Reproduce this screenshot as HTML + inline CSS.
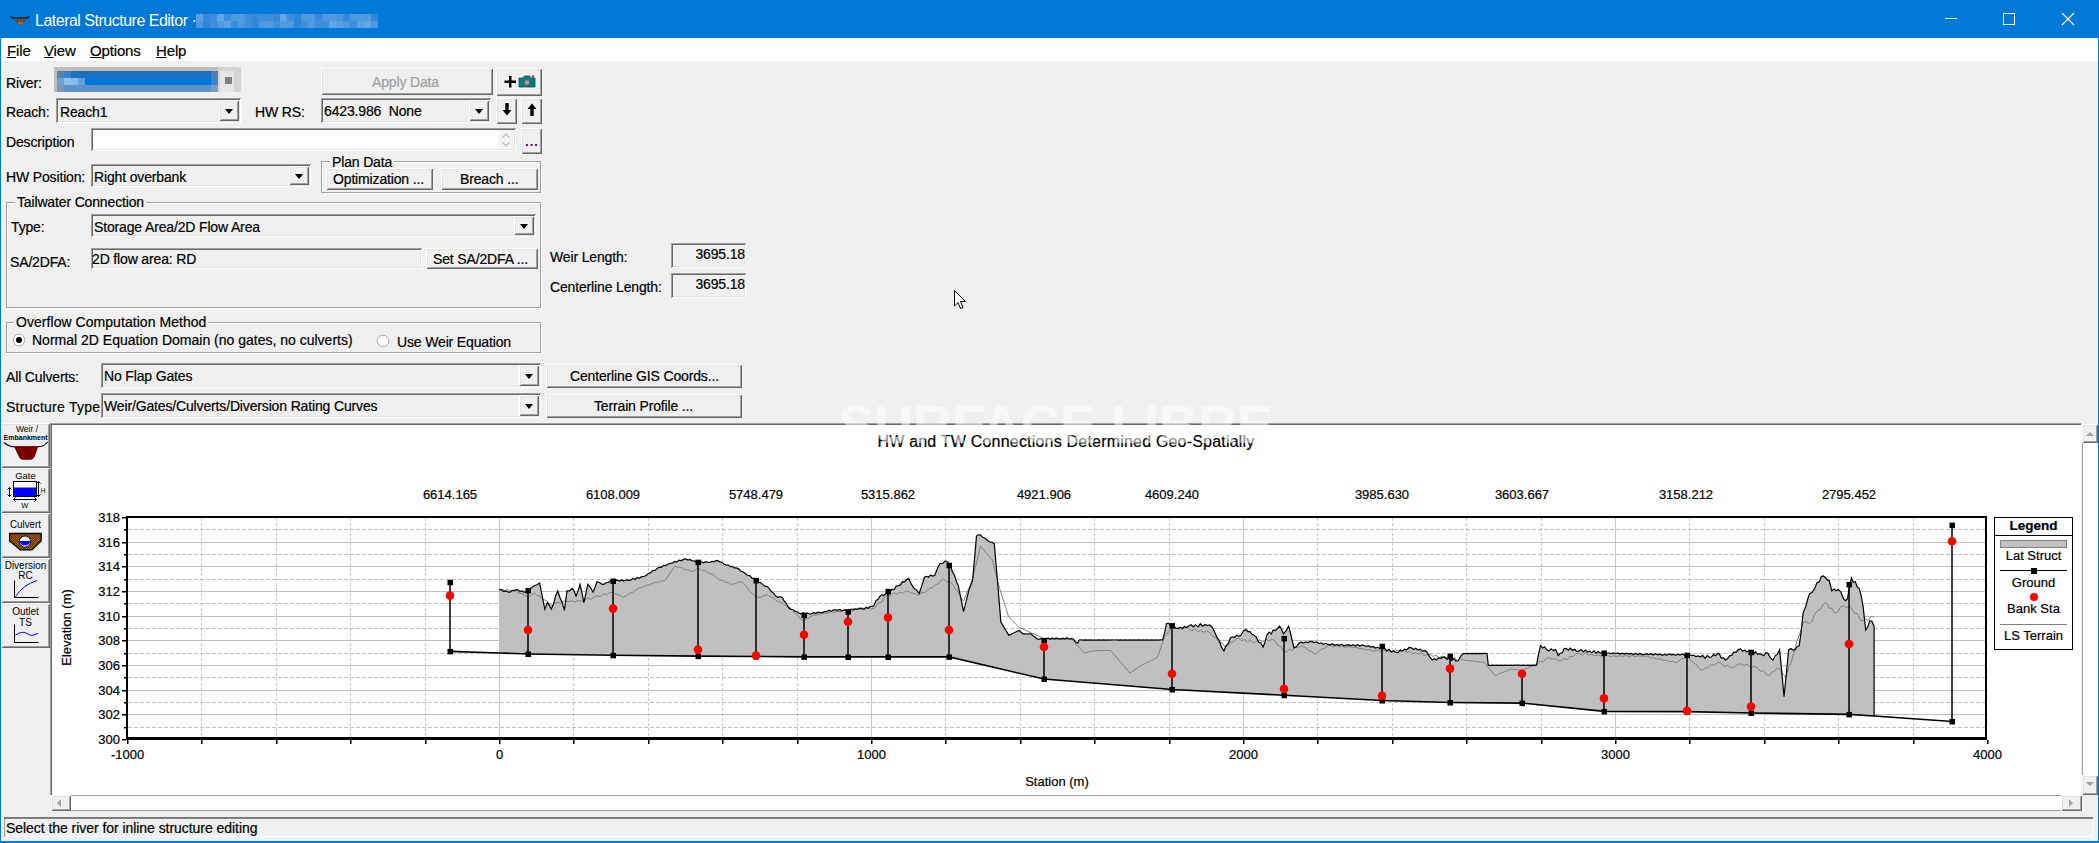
<!DOCTYPE html><html><head><meta charset="utf-8"><style>
html,body{margin:0;padding:0;}
body{width:2099px;height:843px;position:relative;overflow:hidden;background:#f0f0f0;font-family:"Liberation Sans", sans-serif;}
div{position:absolute;box-sizing:border-box;}
.t{white-space:nowrap;color:#000;line-height:1.15;letter-spacing:-0.15px;-webkit-text-stroke:0.2px currentColor;}
.rs{background:#f0f0f0;box-shadow:inset 1px 1px #fff,inset -1px -1px #696969,inset 2px 2px #e3e3e3,inset -2px -2px #a0a0a0;}
.sk{box-shadow:inset 1px 1px #a0a0a0,inset -1px -1px #fff,inset 2px 2px #696969,inset -2px -2px #e3e3e3;}
.grp{border:1px solid #a0a0a0;box-shadow:1px 1px #fff, inset 1px 1px #fff;}
.arr{width:0;height:0;border-left:4.5px solid transparent;border-right:4.5px solid transparent;border-top:5px solid #000;}
svg{position:absolute;left:0;top:0;}
</style></head><body>

<div style="left:0px;top:0px;width:2099px;height:38px;background:#0078d7;"></div>
<svg width="40" height="37" style="left:0;top:0" viewBox="0 0 40 37"><path d="M10.5 16.5 L13 18 L27 18 L29.5 16.5" stroke="#0a2030" stroke-width="1.6" fill="none"/><path d="M15 18.5 L26 18.5 L23.5 24 L17.5 24 Z" fill="#7a3a08"/><path d="M17.5 22 L23.5 22 L23 24 L18 24 Z" fill="#c06010"/><circle cx="18.8" cy="20.3" r="1.1" fill="#0078d7"/><circle cx="21.9" cy="20.3" r="1.1" fill="#0078d7"/></svg>
<div class="t" style="left:35px;top:12px;font-size:16px;letter-spacing:-0.5px;color:#fff;-webkit-text-stroke:0">Lateral Structure Editor ·</div>
<div style="left:196px;top:14px;width:7px;height:7px;background:#5aa0e4"></div><div style="left:196px;top:21px;width:7px;height:7px;background:#4b97e0"></div><div style="left:203px;top:14px;width:7px;height:7px;background:#3489db"></div><div style="left:203px;top:21px;width:7px;height:7px;background:#2f86d9"></div><div style="left:210px;top:14px;width:7px;height:7px;background:#3d8fdd"></div><div style="left:210px;top:21px;width:7px;height:7px;background:#3d8fdd"></div><div style="left:217px;top:14px;width:7px;height:7px;background:#62a5e6"></div><div style="left:217px;top:21px;width:7px;height:7px;background:#4f9ae1"></div><div style="left:224px;top:14px;width:7px;height:7px;background:#3d8fdd"></div><div style="left:224px;top:21px;width:7px;height:7px;background:#5aa0e4"></div><div style="left:231px;top:14px;width:7px;height:7px;background:#4f9ae1"></div><div style="left:231px;top:21px;width:7px;height:7px;background:#3d8fdd"></div><div style="left:238px;top:14px;width:7px;height:7px;background:#4f9ae1"></div><div style="left:238px;top:21px;width:7px;height:7px;background:#4b97e0"></div><div style="left:245px;top:14px;width:7px;height:7px;background:#3d8fdd"></div><div style="left:245px;top:21px;width:7px;height:7px;background:#3d8fdd"></div><div style="left:252px;top:14px;width:7px;height:7px;background:#3489db"></div><div style="left:252px;top:21px;width:7px;height:7px;background:#3489db"></div><div style="left:259px;top:14px;width:7px;height:7px;background:#3d8fdd"></div><div style="left:259px;top:21px;width:7px;height:7px;background:#4b97e0"></div><div style="left:266px;top:14px;width:7px;height:7px;background:#3d8fdd"></div><div style="left:266px;top:21px;width:7px;height:7px;background:#4f9ae1"></div><div style="left:273px;top:14px;width:7px;height:7px;background:#3489db"></div><div style="left:273px;top:21px;width:7px;height:7px;background:#3d8fdd"></div><div style="left:280px;top:14px;width:7px;height:7px;background:#62a5e6"></div><div style="left:280px;top:21px;width:7px;height:7px;background:#4f9ae1"></div><div style="left:287px;top:14px;width:7px;height:7px;background:#3d8fdd"></div><div style="left:287px;top:21px;width:7px;height:7px;background:#4b97e0"></div><div style="left:294px;top:14px;width:7px;height:7px;background:#2f86d9"></div><div style="left:294px;top:21px;width:7px;height:7px;background:#2f86d9"></div><div style="left:301px;top:14px;width:7px;height:7px;background:#4f9ae1"></div><div style="left:301px;top:21px;width:7px;height:7px;background:#3d8fdd"></div><div style="left:308px;top:14px;width:7px;height:7px;background:#4f9ae1"></div><div style="left:308px;top:21px;width:7px;height:7px;background:#4f9ae1"></div><div style="left:315px;top:14px;width:7px;height:7px;background:#3489db"></div><div style="left:315px;top:21px;width:7px;height:7px;background:#3d8fdd"></div><div style="left:322px;top:14px;width:7px;height:7px;background:#4b97e0"></div><div style="left:322px;top:21px;width:7px;height:7px;background:#3d8fdd"></div><div style="left:329px;top:14px;width:7px;height:7px;background:#4f9ae1"></div><div style="left:329px;top:21px;width:7px;height:7px;background:#62a5e6"></div><div style="left:336px;top:14px;width:7px;height:7px;background:#4b97e0"></div><div style="left:336px;top:21px;width:7px;height:7px;background:#5aa0e4"></div><div style="left:343px;top:14px;width:7px;height:7px;background:#3489db"></div><div style="left:343px;top:21px;width:7px;height:7px;background:#4b97e0"></div><div style="left:350px;top:14px;width:7px;height:7px;background:#4f9ae1"></div><div style="left:350px;top:21px;width:7px;height:7px;background:#3d8fdd"></div><div style="left:357px;top:14px;width:7px;height:7px;background:#4f9ae1"></div><div style="left:357px;top:21px;width:7px;height:7px;background:#5aa0e4"></div><div style="left:364px;top:14px;width:7px;height:7px;background:#4f9ae1"></div><div style="left:364px;top:21px;width:7px;height:7px;background:#62a5e6"></div><div style="left:371px;top:14px;width:7px;height:7px;background:#2f86d9"></div><div style="left:371px;top:21px;width:7px;height:7px;background:#4b97e0"></div>
<div style="left:1945px;top:18px;width:12px;height:1px;background:#fff;"></div>
<div style="left:2003px;top:13px;width:12px;height:12px;border:1px solid #fff;"></div>
<svg width="14" height="14" style="left:2061px;top:12px" viewBox="0 0 14 14"><path d="M1 1 L13 13 M13 1 L1 13" stroke="#fff" stroke-width="1.1"/></svg>
<div style="left:0px;top:37px;width:1px;height:806px;background:#0078d7;"></div>
<div style="left:2098px;top:37px;width:1px;height:806px;background:#0078d7;"></div>
<div style="left:0px;top:841px;width:2099px;height:2px;background:#0078d7;"></div>
<div style="left:1px;top:38px;width:2097px;height:23px;background:#fff;"></div>
<div class="t" style="left:7px;top:42px;font-size:15px"><u>F</u>ile</div>
<div class="t" style="left:44px;top:42px;font-size:15px"><u>V</u>iew</div>
<div class="t" style="left:90px;top:42px;font-size:15px"><u>O</u>ptions</div>
<div class="t" style="left:156px;top:42px;font-size:15px"><u>H</u>elp</div>
<div class="t" style="left:6px;top:75px;font-size:14px;">River:</div>
<div style="left:54px;top:67px;width:187px;height:25px;background:#bdbdbd;"></div>
<div style="left:57px;top:71px;width:7px;height:7px;background:#5584b0"></div>
<div style="left:57px;top:78px;width:7px;height:7px;background:#6fa3d0"></div>
<div style="left:57px;top:85px;width:7px;height:7px;background:#7898b8"></div>
<div style="left:64px;top:71px;width:7px;height:7px;background:#3a80c8"></div>
<div style="left:64px;top:78px;width:7px;height:7px;background:#8cc0ea"></div>
<div style="left:64px;top:85px;width:7px;height:7px;background:#5b92c8"></div>
<div style="left:71px;top:71px;width:7px;height:7px;background:#1c70bd"></div>
<div style="left:71px;top:78px;width:7px;height:7px;background:#86bbe8"></div>
<div style="left:71px;top:85px;width:7px;height:7px;background:#5b92c8"></div>
<div style="left:78px;top:71px;width:7px;height:7px;background:#1c70bd"></div>
<div style="left:78px;top:78px;width:7px;height:7px;background:#5fa2e2"></div>
<div style="left:78px;top:85px;width:7px;height:7px;background:#5b92c8"></div>
<div style="left:85px;top:71px;width:7px;height:7px;background:#1c70bd"></div>
<div style="left:85px;top:78px;width:7px;height:7px;background:#0078d7"></div>
<div style="left:85px;top:85px;width:7px;height:7px;background:#5b92c8"></div>
<div style="left:92px;top:71px;width:7px;height:7px;background:#1c70bd"></div>
<div style="left:92px;top:78px;width:7px;height:7px;background:#0078d7"></div>
<div style="left:92px;top:85px;width:7px;height:7px;background:#5b92c8"></div>
<div style="left:99px;top:71px;width:7px;height:7px;background:#1c70bd"></div>
<div style="left:99px;top:78px;width:7px;height:7px;background:#0078d7"></div>
<div style="left:99px;top:85px;width:7px;height:7px;background:#5b92c8"></div>
<div style="left:106px;top:71px;width:7px;height:7px;background:#1c70bd"></div>
<div style="left:106px;top:78px;width:7px;height:7px;background:#0078d7"></div>
<div style="left:106px;top:85px;width:7px;height:7px;background:#5b92c8"></div>
<div style="left:113px;top:71px;width:7px;height:7px;background:#1c70bd"></div>
<div style="left:113px;top:78px;width:7px;height:7px;background:#0078d7"></div>
<div style="left:113px;top:85px;width:7px;height:7px;background:#5b92c8"></div>
<div style="left:120px;top:71px;width:7px;height:7px;background:#1c70bd"></div>
<div style="left:120px;top:78px;width:7px;height:7px;background:#0078d7"></div>
<div style="left:120px;top:85px;width:7px;height:7px;background:#5b92c8"></div>
<div style="left:127px;top:71px;width:7px;height:7px;background:#1c70bd"></div>
<div style="left:127px;top:78px;width:7px;height:7px;background:#0078d7"></div>
<div style="left:127px;top:85px;width:7px;height:7px;background:#5b92c8"></div>
<div style="left:134px;top:71px;width:7px;height:7px;background:#1c70bd"></div>
<div style="left:134px;top:78px;width:7px;height:7px;background:#0078d7"></div>
<div style="left:134px;top:85px;width:7px;height:7px;background:#5b92c8"></div>
<div style="left:141px;top:71px;width:7px;height:7px;background:#1c70bd"></div>
<div style="left:141px;top:78px;width:7px;height:7px;background:#0078d7"></div>
<div style="left:141px;top:85px;width:7px;height:7px;background:#5b92c8"></div>
<div style="left:148px;top:71px;width:7px;height:7px;background:#1c70bd"></div>
<div style="left:148px;top:78px;width:7px;height:7px;background:#0078d7"></div>
<div style="left:148px;top:85px;width:7px;height:7px;background:#5b92c8"></div>
<div style="left:155px;top:71px;width:7px;height:7px;background:#1c70bd"></div>
<div style="left:155px;top:78px;width:7px;height:7px;background:#0078d7"></div>
<div style="left:155px;top:85px;width:7px;height:7px;background:#5b92c8"></div>
<div style="left:162px;top:71px;width:7px;height:7px;background:#1c70bd"></div>
<div style="left:162px;top:78px;width:7px;height:7px;background:#0078d7"></div>
<div style="left:162px;top:85px;width:7px;height:7px;background:#5b92c8"></div>
<div style="left:169px;top:71px;width:7px;height:7px;background:#1c70bd"></div>
<div style="left:169px;top:78px;width:7px;height:7px;background:#0078d7"></div>
<div style="left:169px;top:85px;width:7px;height:7px;background:#5b92c8"></div>
<div style="left:176px;top:71px;width:7px;height:7px;background:#1c70bd"></div>
<div style="left:176px;top:78px;width:7px;height:7px;background:#0078d7"></div>
<div style="left:176px;top:85px;width:7px;height:7px;background:#5b92c8"></div>
<div style="left:183px;top:71px;width:7px;height:7px;background:#1c70bd"></div>
<div style="left:183px;top:78px;width:7px;height:7px;background:#0078d7"></div>
<div style="left:183px;top:85px;width:7px;height:7px;background:#5b92c8"></div>
<div style="left:190px;top:71px;width:7px;height:7px;background:#1c70bd"></div>
<div style="left:190px;top:78px;width:7px;height:7px;background:#0078d7"></div>
<div style="left:190px;top:85px;width:7px;height:7px;background:#5b92c8"></div>
<div style="left:197px;top:71px;width:7px;height:7px;background:#1c70bd"></div>
<div style="left:197px;top:78px;width:7px;height:7px;background:#0078d7"></div>
<div style="left:197px;top:85px;width:7px;height:7px;background:#5b92c8"></div>
<div style="left:204px;top:71px;width:7px;height:7px;background:#1c70bd"></div>
<div style="left:204px;top:78px;width:7px;height:7px;background:#0078d7"></div>
<div style="left:204px;top:85px;width:7px;height:7px;background:#5b92c8"></div>
<div style="left:211px;top:71px;width:7px;height:7px;background:#4a7fb0"></div>
<div style="left:211px;top:78px;width:7px;height:7px;background:#3d86c8"></div>
<div style="left:211px;top:85px;width:7px;height:7px;background:#7a9cc0"></div>
<div style="left:218px;top:67px;width:23px;height:25px;background:#d4d4d4;"></div>
<div style="left:220px;top:71px;width:14px;height:21px;background:#e6e6e6;"></div>
<div style="left:225px;top:77px;width:7px;height:7px;background:#808080;"></div>
<div class="rs" style="left:321px;top:68px;width:172px;height:27px;"></div>
<div class="t" style="left:372px;top:74px;font-size:14px;color:#a0a0a0;">Apply Data</div>
<div class="rs" style="left:496px;top:68px;width:46px;height:28px;"></div>
<svg width="14" height="14" style="left:503px;top:75px" viewBox="0 0 14 14"><path d="M6 1 H8.5 V5.5 H13 V8 H8.5 V12.5 H6 V8 H1.5 V5.5 H6 Z" fill="#000"/></svg>
<svg width="18" height="13" style="left:518px;top:75px" viewBox="0 0 18 13"><path d="M1 3 H5 L6.5 1 H11.5 L13 3 H17 V12 H1 Z" fill="#008080" stroke="#004040" stroke-width="0.7"/><circle cx="9" cy="7.5" r="3.6" fill="#606060"/><circle cx="9" cy="7.5" r="2.2" fill="#a0a0a0"/><rect x="14" y="0.5" width="2" height="2" fill="#f00"/></svg>
<div class="t" style="left:6px;top:104px;font-size:14px;">Reach:</div>
<div class="sk" style="left:56px;top:98px;width:185px;height:25px;background:#f0f0f0;"></div>
<div class="rs" style="left:219px;top:100px;width:20px;height:21px;"></div>
<div class="arr" style="left:225px;top:109px"></div>
<div class="t" style="left:60px;top:104px;font-size:14px;">Reach1</div>
<div class="t" style="left:255px;top:104px;font-size:14px;">HW RS:</div>
<div class="sk" style="left:321px;top:98px;width:170px;height:25px;background:#f0f0f0;"></div>
<div class="rs" style="left:469px;top:100px;width:20px;height:21px;"></div>
<div class="arr" style="left:475px;top:109px"></div>
<div class="t" style="left:324px;top:103px;font-size:14px;">6423.986&nbsp; None</div>
<div class="rs" style="left:496px;top:98px;width:21px;height:26px;"></div>
<div class="rs" style="left:521px;top:98px;width:21px;height:26px;"></div>
<svg width="12" height="16" style="left:501px;top:102px" viewBox="0 0 12 16"><path d="M4.3 1 H7.7 V8 H10.5 L6 13.5 L1.5 8 H4.3 Z" fill="#000"/></svg>
<svg width="12" height="16" style="left:526px;top:102px" viewBox="0 0 12 16"><path d="M4.3 14 H7.7 V7 H10.5 L6 1.5 L1.5 7 H4.3 Z" fill="#000"/></svg>
<div class="t" style="left:6px;top:134px;font-size:14px;">Description</div>
<div class="sk" style="left:91px;top:128px;width:425px;height:23px;background:#fff;"></div>
<div style="left:499px;top:130px;width:15px;height:19px;background:#f4f4f4;"></div>
<svg width="14" height="20" style="left:499px;top:130px" viewBox="0 0 14 20"><path d="M3.5 7.5 L7 4 L10.5 7.5 M3.5 12.5 L7 16 L10.5 12.5" stroke="#c0c0c0" stroke-width="1.4" fill="none"/></svg>
<div class="rs" style="left:521px;top:128px;width:21px;height:26px;"></div>
<svg width="14" height="4" style="left:525px;top:143px" viewBox="0 0 14 4"><rect x="1" y="1" width="2" height="2" fill="#800080"/><rect x="5.5" y="1" width="2" height="2" fill="#800080"/><rect x="10" y="1" width="2" height="2" fill="#800080"/></svg>
<div class="t" style="left:6px;top:169px;font-size:14px;">HW Position:</div>
<div class="sk" style="left:91px;top:164px;width:220px;height:23px;background:#f0f0f0;"></div>
<div class="rs" style="left:289px;top:166px;width:20px;height:19px;"></div>
<div class="arr" style="left:295px;top:174px"></div>
<div class="t" style="left:94px;top:169px;font-size:14px;">Right overbank</div>
<div class="grp" style="left:321px;top:161px;width:220px;height:32px"></div>
<div class="t" style="left:-2px;top:152px;padding:0 2px;background:#f0f0f0;font-size:13.7px"></div>
<div class="t" style="left:332px;top:154px;font-size:14px;background:#f0f0f0;padding:0 2px;margin-left:-2px;">Plan Data</div>
<div class="rs" style="left:326px;top:168px;width:107px;height:22px;"></div>
<div class="t" style="left:333px;top:171px;font-size:14px;">Optimization ...</div>
<div class="rs" style="left:441px;top:168px;width:97px;height:22px;"></div>
<div class="t" style="left:460px;top:171px;font-size:14px;">Breach ...</div>
<div class="grp" style="left:6px;top:202px;width:535px;height:106px"></div>
<div class="t" style="left:-2px;top:193px;padding:0 2px;background:#f0f0f0;font-size:13.7px"></div>
<div class="t" style="left:17px;top:194px;font-size:14px;background:#f0f0f0;padding:0 2px;margin-left:-2px;">Tailwater Connection</div>
<div class="t" style="left:11px;top:219px;font-size:14px;">Type:</div>
<div class="sk" style="left:91px;top:214px;width:445px;height:23px;background:#f0f0f0;"></div>
<div class="rs" style="left:514px;top:216px;width:20px;height:19px;"></div>
<div class="arr" style="left:520px;top:224px"></div>
<div class="t" style="left:94px;top:219px;font-size:14px;">Storage Area/2D Flow Area</div>
<div class="t" style="left:10px;top:254px;font-size:14px;">SA/2DFA:</div>
<div class="sk" style="left:91px;top:248px;width:331px;height:21px;background:#f0f0f0;"></div>
<div class="t" style="left:92px;top:251px;font-size:14px;">2D flow area: RD</div>
<div class="rs" style="left:426px;top:248px;width:112px;height:21px;"></div>
<div class="t" style="left:433px;top:251px;font-size:14px;">Set SA/2DFA ...</div>
<div class="t" style="left:550px;top:249px;font-size:14px;">Weir Length:</div>
<div class="sk" style="left:671px;top:243px;width:75px;height:25px;background:#f0f0f0;"></div>
<div class="t" style="left:545px;top:246px;width:200px;text-align:right;font-size:14px;">3695.18</div>
<div class="t" style="left:550px;top:279px;font-size:14px;">Centerline Length:</div>
<div class="sk" style="left:671px;top:273px;width:75px;height:25px;background:#f0f0f0;"></div>
<div class="t" style="left:545px;top:276px;width:200px;text-align:right;font-size:14px;">3695.18</div>
<div class="grp" style="left:6px;top:322px;width:535px;height:31px"></div>
<div class="t" style="left:-2px;top:313px;padding:0 2px;background:#f0f0f0;font-size:13.7px"></div>
<div class="t" style="left:16px;top:314px;font-size:14px;background:#f0f0f0;padding:0 2px;margin-left:-2px;letter-spacing:0.05px;">Overflow Computation Method</div>
<svg width="14" height="14" style="left:12px;top:333px" viewBox="0 0 14 14"><circle cx="7" cy="7" r="5.8" fill="#fff" stroke="#b0b0b0" stroke-width="1"/><circle cx="7" cy="7" r="3" fill="#000"/></svg>
<div class="t" style="left:32px;top:332px;font-size:14px;letter-spacing:0;">Normal 2D Equation Domain (no gates, no culverts)</div>
<svg width="14" height="14" style="left:376px;top:334px" viewBox="0 0 14 14"><circle cx="7" cy="7" r="5.8" fill="#fff" stroke="#b0b0b0" stroke-width="1"/></svg>
<div class="t" style="left:397px;top:334px;font-size:14px;">Use Weir Equation</div>
<div class="t" style="left:6px;top:369px;font-size:14px;">All Culverts:</div>
<div class="sk" style="left:101px;top:363px;width:440px;height:25px;background:#f0f0f0;"></div>
<div class="rs" style="left:519px;top:365px;width:20px;height:21px;"></div>
<div class="arr" style="left:525px;top:374px"></div>
<div class="t" style="left:104px;top:368px;font-size:14px;">No Flap Gates</div>
<div class="rs" style="left:546px;top:364px;width:196px;height:24px;"></div>
<div class="t" style="left:570px;top:368px;font-size:14px;">Centerline GIS Coords...</div>
<div class="t" style="left:6px;top:399px;font-size:14px;letter-spacing:0.25px;width:98px;overflow:hidden;">Structure Type:</div>
<div class="sk" style="left:101px;top:393px;width:440px;height:25px;background:#f0f0f0;"></div>
<div class="rs" style="left:519px;top:395px;width:20px;height:21px;"></div>
<div class="arr" style="left:525px;top:404px"></div>
<div class="t" style="left:104px;top:398px;font-size:14px;">Weir/Gates/Culverts/Diversion Rating Curves</div>
<div class="rs" style="left:546px;top:394px;width:196px;height:24px;"></div>
<div class="t" style="left:594px;top:398px;font-size:14px;">Terrain Profile ...</div>
<div class="rs" style="left:1px;top:423px;width:49px;height:45px;"></div>
<div class="rs" style="left:1px;top:468px;width:49px;height:45px;"></div>
<div class="rs" style="left:1px;top:513px;width:49px;height:45px;"></div>
<div class="rs" style="left:1px;top:558px;width:49px;height:45px;"></div>
<div class="rs" style="left:1px;top:603px;width:49px;height:45px;"></div>
<svg width="50" height="230" style="left:1px;top:423px" viewBox="0 0 50 230">
<defs><pattern id="chk" width="2" height="2" patternUnits="userSpaceOnUse"><rect width="2" height="2" fill="#8b1a00"/><rect width="1" height="1" fill="#7a7a00"/><rect x="1" y="1" width="1" height="1" fill="#7a7a00"/></pattern></defs>
<text x="26" y="9" font-size="8.5" text-anchor="middle" font-family="Liberation Sans">Weir /</text>
<text x="24.6" y="16.8" font-size="7.6" text-anchor="middle" font-family="Liberation Sans" font-weight="bold" textLength="44" lengthAdjust="spacingAndGlyphs">Embankment</text>
<path d="M3 19.5 Q8 23.8 13.5 23.8 L37 23.8 Q43 23.8 46.5 19" stroke="#000" fill="none" stroke-width="1.1"/>
<path d="M13 23.6 L37 23.6 Q35.5 29 34 33 Q32 36.8 29.5 36.8 L22 36.8 Q19 36.8 17.5 33 Q15.5 29 13 23.6 Z" fill="#7a0000"/>
<text x="24.5" y="55.6" font-size="9.5" text-anchor="middle" font-family="Liberation Sans">Gate</text>
<rect x="12.5" y="58.5" width="23" height="15" fill="#fff" stroke="#000"/>
<rect x="13" y="64.5" width="22" height="8.5" fill="#0000ff"/>
<path d="M8.5 64.5 V73.5 M37.5 58.5 V73.5 M6.5 66.5 L8.5 64.5 L10.5 66.5 M6.5 71.5 L8.5 73.5 L10.5 71.5 M35.5 60.5 L37.5 58.5 L39.5 60.5 M35.5 71.5 L37.5 73.5 L39.5 71.5" stroke="#000" fill="none"/>
<text x="39.8" y="69.5" font-size="6.5" font-family="Liberation Sans">H</text>
<path d="M12.5 76.5 H35.5 M14.5 74.5 L12.5 76.5 L14.5 78.5 M33.5 74.5 L35.5 76.5 L33.5 78.5" stroke="#000" fill="none"/>
<text x="23.7" y="85.4" font-size="7.5" text-anchor="middle" font-family="Liberation Sans">W</text>
<text x="24.5" y="105" font-size="10.5" text-anchor="middle" font-family="Liberation Sans" textLength="31" lengthAdjust="spacingAndGlyphs">Culvert</text>
<path d="M8.6 110.5 H40.1 V117.9 L30.9 126.9 H19.3 L8.6 117.9 Z" fill="url(#chk)" stroke="#000" stroke-width="1.3"/>
<circle cx="24" cy="118.6" r="5.6" fill="#fff" stroke="#000" stroke-width="0.9"/>
<path d="M18.6 118 H29.4 A5.5 5.5 0 0 1 18.6 118 Z" fill="#0000ff"/>
<text x="24.5" y="146" font-size="10" text-anchor="middle" font-family="Liberation Sans">Diversion</text>
<text x="24.5" y="155.6" font-size="10" text-anchor="middle" font-family="Liberation Sans">RC</text>
<path d="M13.5 157.5 V174.5 H37.5" stroke="#000" fill="none"/>
<path d="M14.5 173.5 Q22 162 36 157.5" stroke="#0000ff" fill="none"/>
<text x="24.5" y="191.7" font-size="10" text-anchor="middle" font-family="Liberation Sans">Outlet</text>
<text x="24.5" y="202.5" font-size="10" text-anchor="middle" font-family="Liberation Sans">TS</text>
<path d="M13.5 201.5 V219.5 H37.5" stroke="#000" fill="none"/>
<path d="M14.5 212 Q18 209.5 20.5 209.5 Q23 208.5 26 210.5 Q30 213.5 33 212 Q35 211 37 210.5" stroke="#0000ff" fill="none"/>
</svg>
<div style="left:50px;top:423px;width:2031px;height:372px;background:#fff;border-top:1px solid #a0a0a0;border-left:1px solid #a0a0a0;box-shadow:inset 1px 1px #696969;"></div>
<div style="left:2081px;top:424px;width:17px;height:371px;background:#fff;box-shadow:inset 1px 0 #f0f0f0, inset 2px 0 #a0a0a0;"></div>
<div class="rs" style="left:2082px;top:424px;width:16px;height:19px;"></div>
<div style="left:2086px;top:432px;width:0;height:0;border-left:4px solid transparent;border-right:4px solid transparent;border-bottom:4px solid #a0a0a0"></div>
<div class="rs" style="left:2082px;top:775px;width:16px;height:20px;"></div>
<div style="left:2086px;top:782px;width:0;height:0;border-left:4px solid transparent;border-right:4px solid transparent;border-top:4px solid #a0a0a0"></div>
<div style="left:51px;top:795px;width:2031px;height:16px;background:#fff;box-shadow:inset 0 1px #a0a0a0, inset 0 -1px #a0a0a0;"></div>
<div class="rs" style="left:51px;top:795px;width:20px;height:16px;"></div>
<div style="left:57px;top:799px;width:0;height:0;border-top:4px solid transparent;border-bottom:4px solid transparent;border-right:4px solid #a0a0a0"></div>
<div class="rs" style="left:2061px;top:795px;width:21px;height:16px;"></div>
<div style="left:2069px;top:799px;width:0;height:0;border-top:4px solid transparent;border-bottom:4px solid transparent;border-left:4px solid #a0a0a0"></div>
<div style="left:4px;top:817px;width:2089px;height:20px;box-shadow:inset 1px 1px #a0a0a0, inset -1px -1px #fff;"></div>
<div style="left:4px;top:817px;width:2089px;height:2px;background:#696969;opacity:0.8"></div>
<div class="t" style="left:6px;top:820px;font-size:14px;letter-spacing:-0.05px">Select the river for inline structure editing</div>
<svg width="2099" height="843" viewBox="0 0 2099 843" style="left:0;top:0"><line x1="201.5" y1="518" x2="201.5" y2="737" stroke="#c8c8c8" stroke-width="1" stroke-dasharray="3,2"/><line x1="276.5" y1="518" x2="276.5" y2="737" stroke="#c8c8c8" stroke-width="1" stroke-dasharray="3,2"/><line x1="350.5" y1="518" x2="350.5" y2="737" stroke="#c8c8c8" stroke-width="1" stroke-dasharray="3,2"/><line x1="425.5" y1="518" x2="425.5" y2="737" stroke="#c8c8c8" stroke-width="1" stroke-dasharray="3,2"/><line x1="499.5" y1="518" x2="499.5" y2="737" stroke="#c8c8c8" stroke-width="1"/><line x1="573.5" y1="518" x2="573.5" y2="737" stroke="#c8c8c8" stroke-width="1" stroke-dasharray="3,2"/><line x1="648.5" y1="518" x2="648.5" y2="737" stroke="#c8c8c8" stroke-width="1" stroke-dasharray="3,2"/><line x1="722.5" y1="518" x2="722.5" y2="737" stroke="#c8c8c8" stroke-width="1" stroke-dasharray="3,2"/><line x1="797.5" y1="518" x2="797.5" y2="737" stroke="#c8c8c8" stroke-width="1" stroke-dasharray="3,2"/><line x1="871.5" y1="518" x2="871.5" y2="737" stroke="#c8c8c8" stroke-width="1"/><line x1="945.5" y1="518" x2="945.5" y2="737" stroke="#c8c8c8" stroke-width="1" stroke-dasharray="3,2"/><line x1="1020.5" y1="518" x2="1020.5" y2="737" stroke="#c8c8c8" stroke-width="1" stroke-dasharray="3,2"/><line x1="1094.5" y1="518" x2="1094.5" y2="737" stroke="#c8c8c8" stroke-width="1" stroke-dasharray="3,2"/><line x1="1169.5" y1="518" x2="1169.5" y2="737" stroke="#c8c8c8" stroke-width="1" stroke-dasharray="3,2"/><line x1="1243.5" y1="518" x2="1243.5" y2="737" stroke="#c8c8c8" stroke-width="1"/><line x1="1317.5" y1="518" x2="1317.5" y2="737" stroke="#c8c8c8" stroke-width="1" stroke-dasharray="3,2"/><line x1="1392.5" y1="518" x2="1392.5" y2="737" stroke="#c8c8c8" stroke-width="1" stroke-dasharray="3,2"/><line x1="1466.5" y1="518" x2="1466.5" y2="737" stroke="#c8c8c8" stroke-width="1" stroke-dasharray="3,2"/><line x1="1541.5" y1="518" x2="1541.5" y2="737" stroke="#c8c8c8" stroke-width="1" stroke-dasharray="3,2"/><line x1="1615.5" y1="518" x2="1615.5" y2="737" stroke="#c8c8c8" stroke-width="1"/><line x1="1689.5" y1="518" x2="1689.5" y2="737" stroke="#c8c8c8" stroke-width="1" stroke-dasharray="3,2"/><line x1="1764.5" y1="518" x2="1764.5" y2="737" stroke="#c8c8c8" stroke-width="1" stroke-dasharray="3,2"/><line x1="1838.5" y1="518" x2="1838.5" y2="737" stroke="#c8c8c8" stroke-width="1" stroke-dasharray="3,2"/><line x1="1913.5" y1="518" x2="1913.5" y2="737" stroke="#c8c8c8" stroke-width="1" stroke-dasharray="3,2"/><line x1="128" y1="727.5" x2="1985" y2="727.5" stroke="#c0c0c0" stroke-width="1" stroke-dasharray="4,2"/><line x1="128" y1="714.5" x2="1985" y2="714.5" stroke="#c0c0c0" stroke-width="1"/><line x1="128" y1="702.5" x2="1985" y2="702.5" stroke="#c0c0c0" stroke-width="1" stroke-dasharray="4,2"/><line x1="128" y1="690.5" x2="1985" y2="690.5" stroke="#c0c0c0" stroke-width="1"/><line x1="128" y1="677.5" x2="1985" y2="677.5" stroke="#c0c0c0" stroke-width="1" stroke-dasharray="4,2"/><line x1="128" y1="665.5" x2="1985" y2="665.5" stroke="#c0c0c0" stroke-width="1"/><line x1="128" y1="653.5" x2="1985" y2="653.5" stroke="#c0c0c0" stroke-width="1" stroke-dasharray="4,2"/><line x1="128" y1="640.5" x2="1985" y2="640.5" stroke="#c0c0c0" stroke-width="1"/><line x1="128" y1="628.5" x2="1985" y2="628.5" stroke="#c0c0c0" stroke-width="1" stroke-dasharray="4,2"/><line x1="128" y1="616.5" x2="1985" y2="616.5" stroke="#c0c0c0" stroke-width="1"/><line x1="128" y1="603.5" x2="1985" y2="603.5" stroke="#c0c0c0" stroke-width="1" stroke-dasharray="4,2"/><line x1="128" y1="591.5" x2="1985" y2="591.5" stroke="#c0c0c0" stroke-width="1"/><line x1="128" y1="579.5" x2="1985" y2="579.5" stroke="#c0c0c0" stroke-width="1" stroke-dasharray="4,2"/><line x1="128" y1="566.5" x2="1985" y2="566.5" stroke="#c0c0c0" stroke-width="1"/><line x1="128" y1="554.5" x2="1985" y2="554.5" stroke="#c0c0c0" stroke-width="1" stroke-dasharray="4,2"/><line x1="128" y1="542.5" x2="1985" y2="542.5" stroke="#c0c0c0" stroke-width="1"/><line x1="128" y1="529.5" x2="1985" y2="529.5" stroke="#c0c0c0" stroke-width="1" stroke-dasharray="4,2"/><path d="M499.0 589.6 L501.3 589.8 L503.6 591.5 L506.0 590.8 L508.3 592.2 L510.2 592.1 L512.2 590.4 L514.1 590.8 L516.1 589.6 L518.0 589.9 L520.0 591.4 L522.0 591.0 L523.9 592.2 L526.5 591.6 L529.1 589.6 L531.8 587.4 L534.4 585.7 L537.0 584.8 L539.6 583.0 L542.2 596.0 L544.8 609.1 L547.4 602.6 L549.3 605.4 L551.3 609.1 L553.5 604.1 L555.6 596.0 L557.8 590.9 L560.0 597.8 L562.2 602.7 L564.4 610.4 L567.0 590.9 L569.6 590.8 L572.2 588.3 L574.2 591.2 L576.1 596.0 L578.0 591.1 L580.0 584.4 L582.0 593.0 L583.9 602.6 L585.8 593.9 L587.8 584.4 L590.5 587.5 L593.1 592.2 L595.0 587.4 L597.0 581.7 L599.6 582.5 L602.2 584.4 L604.3 584.2 L606.4 582.5 L608.4 582.5 L610.5 580.7 L612.6 580.4 L614.8 581.1 L617.1 579.9 L619.3 581.0 L621.6 579.9 L623.8 581.0 L626.1 579.9 L628.3 580.4 L630.5 580.2 L632.8 578.5 L635.0 579.5 L637.2 577.5 L639.4 578.3 L641.7 576.6 L643.9 576.5 L646.1 575.6 L648.3 573.5 L650.5 572.9 L652.6 570.6 L654.8 570.5 L657.0 568.7 L659.2 567.1 L661.3 567.4 L663.5 565.3 L665.7 565.9 L667.8 564.1 L670.0 563.5 L672.2 563.2 L674.5 561.5 L676.7 562.1 L679.0 560.1 L681.2 560.7 L683.5 559.4 L685.7 559.0 L687.9 560.1 L690.0 559.4 L692.2 561.0 L694.4 560.8 L696.5 562.1 L698.7 562.2 L701.0 561.4 L703.2 562.9 L705.5 561.9 L707.8 562.2 L709.9 562.3 L712.0 561.4 L714.1 561.7 L716.2 560.5 L718.3 560.9 L720.2 562.2 L722.2 562.3 L724.1 564.3 L726.1 564.8 L728.2 565.1 L730.3 566.7 L732.3 566.3 L734.4 567.9 L736.5 567.9 L738.8 569.1 L741.1 571.4 L743.4 572.0 L745.7 573.9 L747.8 575.5 L749.9 575.6 L751.9 578.2 L754.0 578.4 L756.1 580.0 L758.3 582.2 L760.4 582.6 L762.6 584.4 L764.8 586.2 L766.9 586.3 L769.1 588.3 L771.3 591.5 L773.5 593.2 L775.7 596.1 L777.9 597.3 L780.0 596.6 L782.2 597.4 L784.4 601.3 L786.5 603.7 L788.7 607.8 L790.8 609.3 L792.9 609.5 L794.9 611.3 L797.0 611.7 L799.1 613.1 L801.2 613.8 L803.3 613.0 L805.4 614.1 L807.5 613.2 L809.6 613.8 L811.7 614.0 L813.8 612.5 L815.8 613.5 L817.9 612.2 L820.0 612.5 L822.2 612.9 L824.5 611.4 L826.7 611.7 L829.0 610.3 L831.2 611.3 L833.5 609.9 L835.7 609.9 L837.8 610.3 L839.9 609.4 L841.9 611.0 L844.0 609.9 L846.1 610.4 L848.3 610.9 L850.6 609.2 L852.8 610.2 L855.1 608.9 L857.3 609.4 L859.6 608.6 L861.8 608.6 L863.9 609.4 L866.0 607.2 L868.0 608.4 L870.1 606.3 L872.2 606.5 L874.2 605.0 L876.1 600.4 L878.0 599.4 L880.0 596.1 L882.0 594.8 L883.9 595.6 L885.8 593.3 L887.8 593.0 L889.9 592.1 L892.0 589.2 L894.1 589.8 L896.2 586.2 L898.3 585.7 L900.4 584.9 L902.5 581.6 L904.5 581.9 L906.6 579.5 L908.7 578.4 L911.3 584.0 L913.9 588.3 L916.5 590.1 L919.2 593.5 L921.8 585.8 L924.4 577.3 L926.5 576.3 L928.6 577.2 L930.6 575.1 L932.7 576.1 L934.8 575.2 L937.4 568.6 L940.0 563.5 L942.6 563.4 L945.2 560.9 L947.9 562.2 L950.5 566.1 L952.5 572.0 L954.4 574.9 L956.3 581.4 L958.3 585.7 L960.9 598.4 L963.5 611.7 L966.1 601.6 L968.7 590.9 L970.7 585.4 L972.6 580.4 L974.5 559.0 L976.5 536.1 L978.5 534.8 L980.4 534.8 L982.6 537.3 L984.8 538.0 L987.0 540.0 L989.4 541.9 L991.9 542.1 L994.3 543.9 L997.0 575.2 L999.0 599.3 L1000.9 622.2 L1002.9 625.4 L1004.8 628.8 L1006.8 631.9 L1008.7 635.2 L1010.8 634.4 L1012.9 633.2 L1014.9 632.5 L1017.0 631.3 L1019.1 630.5 L1021.0 632.3 L1023.0 633.9 L1025.0 633.8 L1027.0 634.0 L1028.9 633.8 L1030.9 633.9 L1033.1 635.8 L1035.2 637.2 L1037.4 639.1 L1039.6 639.1 L1041.7 638.7 L1043.9 638.6 L1046.0 639.3 L1048.0 637.9 L1050.1 639.2 L1052.1 638.0 L1054.2 639.1 L1056.2 638.0 L1058.3 638.6 L1060.5 639.1 L1062.6 638.2 L1064.8 639.1 L1067.0 637.7 L1069.1 639.2 L1071.3 638.4 L1073.5 639.3 L1075.6 642.0 L1077.8 643.1 L1079.1 640.0 L1081.3 639.9 L1083.5 640.1 L1085.7 639.9 L1087.9 640.1 L1090.1 639.9 L1092.3 640.1 L1094.5 640.0 L1096.7 640.1 L1098.9 639.9 L1101.1 640.1 L1103.3 639.9 L1105.5 640.1 L1107.7 639.9 L1109.9 640.1 L1112.1 639.9 L1114.3 640.0 L1116.5 639.9 L1118.7 640.1 L1120.8 639.9 L1123.0 640.1 L1125.2 639.9 L1127.4 640.1 L1129.6 639.9 L1131.8 640.1 L1134.0 639.9 L1136.2 640.1 L1138.4 639.9 L1140.6 640.1 L1142.8 639.9 L1145.0 640.1 L1147.2 639.9 L1149.4 640.1 L1151.6 639.9 L1153.8 640.1 L1156.0 639.9 L1158.2 640.1 L1160.4 639.9 L1162.6 640.0 L1164.5 633.2 L1166.5 623.5 L1168.9 623.3 L1171.2 627.1 L1173.6 625.8 L1175.9 628.3 L1178.3 628.7 L1180.4 627.2 L1182.5 628.4 L1184.5 626.4 L1186.6 627.6 L1188.7 626.1 L1191.0 624.8 L1193.3 626.8 L1195.7 624.8 L1198.0 626.9 L1200.3 623.8 L1202.6 626.2 L1205.0 624.5 L1207.3 625.5 L1209.6 624.8 L1212.2 627.2 L1214.8 632.6 L1217.1 637.7 L1219.3 640.5 L1221.6 647.4 L1223.9 650.9 L1226.1 645.7 L1228.3 643.5 L1230.5 637.8 L1232.6 636.8 L1234.7 637.4 L1236.7 635.3 L1238.8 636.2 L1240.9 635.2 L1243.5 630.9 L1246.1 629.5 L1248.0 631.7 L1250.0 631.7 L1252.0 634.3 L1253.9 635.2 L1256.2 637.0 L1258.5 642.1 L1260.8 642.9 L1263.1 647.0 L1265.0 642.1 L1267.0 634.7 L1269.1 632.1 L1271.2 633.9 L1273.2 629.9 L1275.3 630.6 L1277.4 628.7 L1279.6 626.1 L1281.5 629.0 L1283.5 633.9 L1286.1 630.7 L1288.7 626.1 L1291.3 636.5 L1293.9 647.8 L1296.5 646.5 L1299.1 643.1 L1301.3 642.2 L1303.5 643.0 L1305.7 642.0 L1307.8 642.6 L1310.0 641.3 L1312.2 641.7 L1314.4 642.6 L1316.7 641.9 L1318.9 643.5 L1321.1 642.8 L1323.3 644.3 L1325.6 643.3 L1327.8 644.4 L1330.1 644.8 L1332.4 643.8 L1334.7 645.3 L1336.9 644.4 L1339.2 645.3 L1341.5 644.3 L1343.8 645.8 L1346.1 645.1 L1348.4 644.7 L1350.7 645.8 L1353.0 644.6 L1355.2 646.1 L1357.5 644.7 L1359.8 646.0 L1362.1 645.0 L1364.4 645.7 L1366.6 646.4 L1368.8 645.7 L1371.0 647.4 L1373.2 646.4 L1375.5 648.0 L1377.7 647.3 L1379.9 648.7 L1382.1 648.3 L1384.4 647.7 L1386.6 650.9 L1388.9 649.4 L1391.2 652.0 L1393.4 650.9 L1395.7 652.2 L1397.9 652.8 L1400.2 649.8 L1402.4 651.0 L1404.6 649.2 L1406.8 649.8 L1409.1 647.5 L1411.3 647.8 L1413.5 649.5 L1415.8 648.2 L1418.0 650.1 L1420.3 649.2 L1422.5 651.4 L1424.8 650.5 L1427.0 652.2 L1429.6 656.6 L1432.2 660.0 L1434.3 658.8 L1436.4 660.1 L1438.4 657.9 L1440.5 658.4 L1442.6 657.4 L1444.8 657.0 L1447.1 659.4 L1449.3 657.7 L1451.6 660.4 L1453.8 658.6 L1456.1 661.2 L1458.3 660.8 L1460.9 655.9 L1463.5 653.5 L1465.6 653.6 L1467.8 653.4 L1469.9 653.6 L1472.0 653.4 L1474.2 653.6 L1476.3 653.4 L1478.5 653.6 L1480.6 653.4 L1482.7 653.6 L1484.9 653.4 L1487.0 653.5 L1488.3 665.2 L1490.5 665.3 L1492.7 665.1 L1494.9 665.3 L1497.1 665.1 L1499.3 665.3 L1501.4 665.1 L1503.6 665.3 L1505.8 665.1 L1508.0 665.3 L1510.2 665.1 L1512.4 665.3 L1514.6 665.1 L1516.8 665.2 L1519.0 665.1 L1521.2 665.3 L1523.4 665.1 L1525.5 665.3 L1527.7 665.1 L1529.9 665.3 L1532.1 665.1 L1534.3 665.3 L1536.5 665.2 L1538.5 654.4 L1540.5 645.7 L1542.5 647.9 L1544.5 646.7 L1546.5 649.6 L1548.8 651.1 L1551.1 648.8 L1553.4 650.6 L1555.7 649.6 L1558.3 655.6 L1560.2 653.2 L1562.2 652.9 L1564.1 648.7 L1566.1 648.3 L1568.3 650.2 L1570.4 648.2 L1572.6 650.4 L1574.8 649.3 L1576.9 651.6 L1579.1 650.9 L1581.2 649.6 L1583.3 651.9 L1585.4 650.1 L1587.5 652.1 L1589.6 651.1 L1591.8 652.7 L1593.9 650.9 L1596.0 653.1 L1598.1 651.6 L1600.2 653.2 L1602.3 652.5 L1604.4 653.0 L1606.6 653.7 L1608.8 652.8 L1611.1 653.7 L1613.3 652.9 L1615.5 653.7 L1617.7 652.9 L1620.0 654.0 L1622.2 653.1 L1624.4 654.1 L1626.6 653.2 L1628.8 654.1 L1631.1 653.5 L1633.3 654.5 L1635.5 653.4 L1637.7 654.6 L1640.0 653.4 L1642.2 654.8 L1644.4 654.3 L1646.6 653.6 L1648.8 654.7 L1651.1 653.7 L1653.3 655.1 L1655.5 653.7 L1657.7 654.9 L1659.9 654.1 L1662.2 655.3 L1664.4 654.2 L1666.6 655.4 L1668.8 653.9 L1671.1 654.9 L1673.3 654.3 L1675.5 655.3 L1677.7 654.3 L1679.9 655.0 L1682.2 654.0 L1684.4 655.2 L1686.6 654.8 L1688.9 654.4 L1691.2 655.6 L1693.5 655.1 L1695.8 656.5 L1698.1 655.9 L1700.4 657.1 L1702.7 655.4 L1705.0 658.4 L1707.3 655.6 L1709.6 657.4 L1711.5 657.0 L1713.5 654.4 L1715.5 655.8 L1717.4 653.5 L1719.4 654.1 L1721.3 658.0 L1723.2 657.7 L1725.2 660.0 L1727.4 658.8 L1729.6 655.9 L1731.8 655.3 L1733.9 652.0 L1736.1 652.4 L1738.3 649.6 L1740.5 648.9 L1742.6 651.1 L1744.8 650.2 L1747.0 652.0 L1749.1 650.3 L1751.3 652.2 L1753.4 654.3 L1755.5 651.7 L1757.6 654.3 L1759.7 653.7 L1761.8 654.8 L1763.8 655.8 L1765.8 652.7 L1767.8 653.1 L1770.4 657.9 L1773.0 660.1 L1775.2 655.8 L1777.4 654.2 L1779.6 649.7 L1781.8 672.1 L1784.0 696.7 L1786.3 674.2 L1788.7 649.7 L1790.9 648.5 L1793.0 650.2 L1795.2 649.7 L1797.2 646.5 L1799.2 645.8 L1801.2 631.4 L1803.1 613.1 L1805.7 606.6 L1807.7 599.2 L1809.6 593.6 L1812.2 592.3 L1814.8 588.3 L1817.0 582.6 L1819.2 581.8 L1821.4 576.6 L1823.3 576.0 L1825.3 577.4 L1827.2 579.9 L1829.2 580.5 L1831.8 590.9 L1834.0 589.0 L1836.1 590.7 L1838.3 589.6 L1840.9 592.2 L1843.6 598.8 L1845.5 600.7 L1847.5 598.8 L1849.5 586.6 L1851.4 577.9 L1853.4 582.5 L1855.3 581.5 L1857.2 587.0 L1859.2 588.3 L1861.2 595.9 L1863.1 606.6 L1865.7 630.1 L1867.7 627.0 L1869.7 621.0 L1871.9 621.4 L1874.1 626.2 L1874.1 716.0 L1849.3 714.4 L1751.3 713.0 L1686.6 711.6 L1604.4 711.4 L1522.2 703.1 L1449.7 702.5 L1382.1 700.5 L1284.3 695.2 L1172.3 689.5 L1043.9 679.0 L949.2 656.9 L804.4 656.9 L756.1 656.5 L698.2 656.1 L613.4 655.3 L528.4 654.0 L499.0 653.0 Z" fill="#c0c0c0"/><polyline points="499.0,589.6 501.8,589.2 504.7,590.4 507.5,589.6 510.3,591.0 513.2,590.1 516.0,590.9 519.2,593.1 522.5,593.7 525.8,596.4 529.0,597.4 531.5,594.6 534.0,593.0 536.8,595.3 539.5,595.9 542.2,599.3 545.0,600.0 547.5,601.8 550.0,605.0 552.7,605.2 555.3,603.0 558.0,602.6 560.7,602.8 563.3,601.0 566.0,601.3 569.0,601.7 572.0,600.6 575.0,602.2 578.0,600.4 581.0,601.3 584.2,600.9 587.5,598.2 590.8,599.3 594.0,597.4 597.2,595.9 600.3,596.6 603.5,594.0 606.7,594.4 609.8,592.7 613.0,592.2 616.3,594.6 619.7,595.1 623.0,597.4 626.2,596.1 629.4,593.2 632.6,592.6 635.8,589.9 639.0,588.3 642.2,587.6 645.5,585.4 648.8,585.1 652.0,583.6 655.2,582.4 658.5,582.2 661.8,580.9 665.0,580.4 668.3,576.0 671.7,570.5 675.0,566.0 678.2,567.4 681.4,567.5 684.6,569.7 687.8,569.8 691.0,571.3 693.7,571.1 696.3,569.1 699.0,568.7 702.2,570.7 705.5,570.8 708.8,573.3 712.0,574.0 714.7,575.8 717.3,578.5 720.0,580.0 722.8,580.5 725.6,582.4 728.5,582.6 731.3,584.4 734.8,583.8 738.2,582.2 741.7,581.7 744.3,584.9 747.0,587.1 749.6,591.1 752.2,593.5 754.8,595.2 757.4,597.4 760.9,597.2 764.3,595.3 767.8,594.8 770.4,597.0 773.1,597.8 775.7,600.0 779.0,602.0 782.2,602.9 785.5,605.4 788.7,606.5 791.6,608.9 794.4,612.6 797.3,614.6 800.1,618.4 803.0,620.9 806.1,618.9 809.1,617.8 812.2,615.7 815.5,614.8 818.7,614.7 822.0,613.2 825.2,613.1 828.2,613.1 831.2,611.7 834.2,612.5 837.1,611.3 840.1,611.9 843.1,610.1 846.1,610.4 849.2,610.1 852.4,608.7 855.5,609.3 858.7,607.9 861.8,607.8 865.0,609.1 868.3,607.2 871.5,608.7 874.8,607.8 878.0,603.3 881.3,602.3 884.5,597.2 887.8,594.8 890.8,595.6 893.8,592.7 896.8,594.3 899.7,592.4 902.7,593.3 905.7,591.1 908.7,591.4 911.3,593.1 913.9,593.2 916.5,594.8 919.1,594.7 921.8,592.3 924.4,592.7 927.0,590.9 929.8,587.9 932.6,587.8 935.5,584.4 938.3,584.0 941.1,580.3 943.9,579.1 946.9,582.0 950.0,581.8 953.0,584.4 955.6,589.3 958.2,592.2 960.9,597.6 963.5,601.3 966.5,593.6 969.6,586.8 972.6,579.1 975.2,567.6 977.8,558.0 980.4,546.5 983.4,549.3 986.3,553.4 989.2,556.0 992.2,559.6 995.9,574.5 999.6,588.3 1002.6,597.8 1005.7,607.5 1008.7,617.0 1012.2,620.4 1015.6,624.1 1019.1,627.4 1022.0,628.6 1024.9,630.1 1027.8,631.2 1030.7,632.7 1033.6,633.8 1036.5,635.2 1039.4,636.4 1042.3,637.9 1045.2,639.1 1048.1,638.7 1051.0,639.6 1053.9,638.8 1056.8,639.6 1059.7,638.9 1062.6,639.4 1065.5,638.6 1068.4,639.6 1071.3,639.1 1074.6,642.1 1077.8,646.4 1081.1,649.4 1084.4,653.0 1087.0,652.4 1089.6,651.5 1092.2,650.9 1095.2,650.9 1098.3,650.6 1101.3,650.7 1104.3,650.5 1107.4,650.6 1110.4,650.4 1113.2,653.5 1116.0,657.0 1118.8,660.0 1121.6,663.4 1124.4,666.5 1127.2,669.9 1130.0,673.0 1133.0,671.0 1135.9,669.2 1138.8,667.0 1141.8,665.2 1144.9,663.7 1148.0,662.0 1151.2,660.6 1154.3,658.8 1157.4,657.4 1160.0,650.1 1162.6,642.5 1165.2,635.2 1167.8,633.2 1170.4,628.5 1173.0,627.4 1176.1,628.2 1179.3,627.3 1182.4,629.3 1185.6,627.4 1188.7,628.7 1191.7,630.5 1194.7,629.0 1197.7,631.7 1200.6,630.4 1203.6,632.2 1206.6,630.8 1209.6,632.6 1212.7,636.1 1215.8,637.5 1219.0,642.5 1222.1,642.9 1225.2,647.0 1227.8,645.8 1230.5,642.4 1233.1,642.0 1235.7,639.1 1238.7,638.2 1241.6,640.7 1244.6,639.6 1247.6,641.9 1250.6,639.8 1253.5,642.8 1256.5,641.7 1259.6,639.6 1262.8,642.2 1265.9,639.2 1269.1,641.0 1272.2,639.1 1275.0,640.9 1277.8,645.2 1280.5,646.0 1283.3,651.1 1286.1,652.2 1289.2,649.4 1292.3,650.4 1295.5,647.4 1298.6,647.9 1301.7,645.7 1305.0,647.4 1308.2,650.3 1311.5,651.5 1314.8,654.0 1318.0,652.2 1321.3,649.4 1324.5,648.4 1327.8,645.7 1330.7,645.4 1333.7,646.6 1336.6,645.7 1339.5,646.6 1342.5,645.9 1345.4,647.3 1348.4,646.5 1351.3,647.0 1354.2,647.7 1357.2,647.5 1360.1,648.9 1363.0,648.5 1366.0,650.1 1368.9,649.4 1371.9,651.0 1374.8,650.9 1377.7,650.7 1380.7,651.8 1383.6,649.8 1386.5,651.4 1389.5,650.4 1392.4,652.0 1395.4,649.7 1398.3,650.9 1401.2,651.8 1404.0,650.7 1406.9,652.6 1409.8,651.4 1412.7,653.8 1415.5,652.6 1418.4,654.2 1421.3,652.9 1424.1,655.3 1427.0,654.8 1430.0,654.1 1433.1,656.4 1436.1,655.4 1439.2,657.8 1442.2,656.0 1445.2,658.2 1448.3,657.0 1451.3,659.3 1454.4,657.7 1457.4,660.4 1460.5,658.8 1463.5,660.0 1466.5,660.5 1469.5,660.6 1472.5,661.2 1475.4,661.4 1478.4,662.0 1481.4,662.1 1484.4,662.6 1487.9,667.1 1491.3,671.2 1494.8,675.7 1497.9,674.5 1501.1,672.9 1504.2,671.9 1507.4,670.3 1510.5,669.1 1513.4,669.5 1516.3,669.7 1519.3,670.2 1522.2,670.4 1525.1,669.0 1528.1,667.9 1531.0,666.4 1533.9,665.2 1537.0,664.5 1540.2,661.4 1543.3,661.8 1546.5,658.0 1549.6,658.2 1552.4,659.4 1555.2,658.7 1558.1,660.8 1560.9,660.8 1563.9,658.4 1567.0,659.7 1570.0,656.5 1573.0,656.5 1576.1,653.7 1579.1,653.5 1582.3,655.0 1585.4,652.7 1588.6,655.0 1591.8,654.2 1594.9,655.8 1598.1,654.7 1601.2,656.1 1604.4,656.1 1607.5,655.5 1610.6,656.6 1613.6,655.8 1616.7,656.4 1619.8,655.8 1622.9,656.4 1625.9,655.5 1629.0,656.5 1632.1,655.6 1635.2,656.7 1638.2,655.7 1641.3,656.4 1644.4,656.1 1647.5,656.1 1650.7,658.1 1653.8,657.7 1656.9,659.2 1660.1,658.7 1663.2,660.4 1666.3,660.3 1669.4,661.5 1672.6,661.3 1675.7,662.6 1678.4,661.6 1681.2,659.0 1683.9,658.2 1686.6,656.1 1689.6,658.5 1692.7,662.2 1695.7,664.0 1698.8,668.1 1701.8,670.4 1704.9,668.1 1708.0,667.8 1711.2,664.7 1714.3,665.1 1717.4,662.6 1720.7,662.5 1724.0,666.5 1727.2,665.3 1730.5,667.8 1734.0,667.2 1737.4,664.5 1740.9,663.9 1744.2,665.4 1747.4,664.4 1750.7,667.3 1753.9,666.5 1757.0,667.3 1760.2,671.4 1763.3,670.4 1766.5,674.6 1769.6,675.7 1772.2,672.0 1774.8,671.1 1777.4,667.8 1780.3,669.6 1783.2,674.5 1786.1,677.1 1788.7,667.4 1791.3,662.0 1793.9,652.3 1797.0,640.9 1800.0,633.1 1803.1,622.3 1806.3,621.9 1809.6,623.6 1812.2,621.0 1814.8,614.1 1817.4,610.5 1820.5,609.3 1823.5,603.9 1826.6,602.7 1829.2,608.3 1831.8,608.1 1834.4,613.1 1837.5,612.5 1840.5,606.8 1843.6,605.3 1846.2,608.0 1848.8,605.7 1851.4,607.9 1854.3,613.2 1857.2,613.6 1860.2,619.7 1863.1,621.0 1865.7,619.0 1868.3,620.5 1871.0,616.5 1873.6,617.0" fill="none" stroke="#808080" stroke-width="1"/><polyline points="499.0,589.6 501.3,589.8 503.6,591.5 506.0,590.8 508.3,592.2 510.2,592.1 512.2,590.4 514.1,590.8 516.1,589.6 518.0,589.9 520.0,591.4 522.0,591.0 523.9,592.2 526.5,591.6 529.1,589.6 531.8,587.4 534.4,585.7 537.0,584.8 539.6,583.0 542.2,596.0 544.8,609.1 547.4,602.6 549.3,605.4 551.3,609.1 553.5,604.1 555.6,596.0 557.8,590.9 560.0,597.8 562.2,602.7 564.4,610.4 567.0,590.9 569.6,590.8 572.2,588.3 574.2,591.2 576.1,596.0 578.0,591.1 580.0,584.4 582.0,593.0 583.9,602.6 585.8,593.9 587.8,584.4 590.5,587.5 593.1,592.2 595.0,587.4 597.0,581.7 599.6,582.5 602.2,584.4 604.3,584.2 606.4,582.5 608.4,582.5 610.5,580.7 612.6,580.4 614.8,581.1 617.1,579.9 619.3,581.0 621.6,579.9 623.8,581.0 626.1,579.9 628.3,580.4 630.5,580.2 632.8,578.5 635.0,579.5 637.2,577.5 639.4,578.3 641.7,576.6 643.9,576.5 646.1,575.6 648.3,573.5 650.5,572.9 652.6,570.6 654.8,570.5 657.0,568.7 659.2,567.1 661.3,567.4 663.5,565.3 665.7,565.9 667.8,564.1 670.0,563.5 672.2,563.2 674.5,561.5 676.7,562.1 679.0,560.1 681.2,560.7 683.5,559.4 685.7,559.0 687.9,560.1 690.0,559.4 692.2,561.0 694.4,560.8 696.5,562.1 698.7,562.2 701.0,561.4 703.2,562.9 705.5,561.9 707.8,562.2 709.9,562.3 712.0,561.4 714.1,561.7 716.2,560.5 718.3,560.9 720.2,562.2 722.2,562.3 724.1,564.3 726.1,564.8 728.2,565.1 730.3,566.7 732.3,566.3 734.4,567.9 736.5,567.9 738.8,569.1 741.1,571.4 743.4,572.0 745.7,573.9 747.8,575.5 749.9,575.6 751.9,578.2 754.0,578.4 756.1,580.0 758.3,582.2 760.4,582.6 762.6,584.4 764.8,586.2 766.9,586.3 769.1,588.3 771.3,591.5 773.5,593.2 775.7,596.1 777.9,597.3 780.0,596.6 782.2,597.4 784.4,601.3 786.5,603.7 788.7,607.8 790.8,609.3 792.9,609.5 794.9,611.3 797.0,611.7 799.1,613.1 801.2,613.8 803.3,613.0 805.4,614.1 807.5,613.2 809.6,613.8 811.7,614.0 813.8,612.5 815.8,613.5 817.9,612.2 820.0,612.5 822.2,612.9 824.5,611.4 826.7,611.7 829.0,610.3 831.2,611.3 833.5,609.9 835.7,609.9 837.8,610.3 839.9,609.4 841.9,611.0 844.0,609.9 846.1,610.4 848.3,610.9 850.6,609.2 852.8,610.2 855.1,608.9 857.3,609.4 859.6,608.6 861.8,608.6 863.9,609.4 866.0,607.2 868.0,608.4 870.1,606.3 872.2,606.5 874.2,605.0 876.1,600.4 878.0,599.4 880.0,596.1 882.0,594.8 883.9,595.6 885.8,593.3 887.8,593.0 889.9,592.1 892.0,589.2 894.1,589.8 896.2,586.2 898.3,585.7 900.4,584.9 902.5,581.6 904.5,581.9 906.6,579.5 908.7,578.4 911.3,584.0 913.9,588.3 916.5,590.1 919.2,593.5 921.8,585.8 924.4,577.3 926.5,576.3 928.6,577.2 930.6,575.1 932.7,576.1 934.8,575.2 937.4,568.6 940.0,563.5 942.6,563.4 945.2,560.9 947.9,562.2 950.5,566.1 952.5,572.0 954.4,574.9 956.3,581.4 958.3,585.7 960.9,598.4 963.5,611.7 966.1,601.6 968.7,590.9 970.7,585.4 972.6,580.4 974.5,559.0 976.5,536.1 978.5,534.8 980.4,534.8 982.6,537.3 984.8,538.0 987.0,540.0 989.4,541.9 991.9,542.1 994.3,543.9 997.0,575.2 999.0,599.3 1000.9,622.2 1002.9,625.4 1004.8,628.8 1006.8,631.9 1008.7,635.2 1010.8,634.4 1012.9,633.2 1014.9,632.5 1017.0,631.3 1019.1,630.5 1021.0,632.3 1023.0,633.9 1025.0,633.8 1027.0,634.0 1028.9,633.8 1030.9,633.9 1033.1,635.8 1035.2,637.2 1037.4,639.1 1039.6,639.1 1041.7,638.7 1043.9,638.6 1046.0,639.3 1048.0,637.9 1050.1,639.2 1052.1,638.0 1054.2,639.1 1056.2,638.0 1058.3,638.6 1060.5,639.1 1062.6,638.2 1064.8,639.1 1067.0,637.7 1069.1,639.2 1071.3,638.4 1073.5,639.3 1075.6,642.0 1077.8,643.1 1079.1,640.0 1081.3,639.9 1083.5,640.1 1085.7,639.9 1087.9,640.1 1090.1,639.9 1092.3,640.1 1094.5,640.0 1096.7,640.1 1098.9,639.9 1101.1,640.1 1103.3,639.9 1105.5,640.1 1107.7,639.9 1109.9,640.1 1112.1,639.9 1114.3,640.0 1116.5,639.9 1118.7,640.1 1120.8,639.9 1123.0,640.1 1125.2,639.9 1127.4,640.1 1129.6,639.9 1131.8,640.1 1134.0,639.9 1136.2,640.1 1138.4,639.9 1140.6,640.1 1142.8,639.9 1145.0,640.1 1147.2,639.9 1149.4,640.1 1151.6,639.9 1153.8,640.1 1156.0,639.9 1158.2,640.1 1160.4,639.9 1162.6,640.0 1164.5,633.2 1166.5,623.5 1168.9,623.3 1171.2,627.1 1173.6,625.8 1175.9,628.3 1178.3,628.7 1180.4,627.2 1182.5,628.4 1184.5,626.4 1186.6,627.6 1188.7,626.1 1191.0,624.8 1193.3,626.8 1195.7,624.8 1198.0,626.9 1200.3,623.8 1202.6,626.2 1205.0,624.5 1207.3,625.5 1209.6,624.8 1212.2,627.2 1214.8,632.6 1217.1,637.7 1219.3,640.5 1221.6,647.4 1223.9,650.9 1226.1,645.7 1228.3,643.5 1230.5,637.8 1232.6,636.8 1234.7,637.4 1236.7,635.3 1238.8,636.2 1240.9,635.2 1243.5,630.9 1246.1,629.5 1248.0,631.7 1250.0,631.7 1252.0,634.3 1253.9,635.2 1256.2,637.0 1258.5,642.1 1260.8,642.9 1263.1,647.0 1265.0,642.1 1267.0,634.7 1269.1,632.1 1271.2,633.9 1273.2,629.9 1275.3,630.6 1277.4,628.7 1279.6,626.1 1281.5,629.0 1283.5,633.9 1286.1,630.7 1288.7,626.1 1291.3,636.5 1293.9,647.8 1296.5,646.5 1299.1,643.1 1301.3,642.2 1303.5,643.0 1305.7,642.0 1307.8,642.6 1310.0,641.3 1312.2,641.7 1314.4,642.6 1316.7,641.9 1318.9,643.5 1321.1,642.8 1323.3,644.3 1325.6,643.3 1327.8,644.4 1330.1,644.8 1332.4,643.8 1334.7,645.3 1336.9,644.4 1339.2,645.3 1341.5,644.3 1343.8,645.8 1346.1,645.1 1348.4,644.7 1350.7,645.8 1353.0,644.6 1355.2,646.1 1357.5,644.7 1359.8,646.0 1362.1,645.0 1364.4,645.7 1366.6,646.4 1368.8,645.7 1371.0,647.4 1373.2,646.4 1375.5,648.0 1377.7,647.3 1379.9,648.7 1382.1,648.3 1384.4,647.7 1386.6,650.9 1388.9,649.4 1391.2,652.0 1393.4,650.9 1395.7,652.2 1397.9,652.8 1400.2,649.8 1402.4,651.0 1404.6,649.2 1406.8,649.8 1409.1,647.5 1411.3,647.8 1413.5,649.5 1415.8,648.2 1418.0,650.1 1420.3,649.2 1422.5,651.4 1424.8,650.5 1427.0,652.2 1429.6,656.6 1432.2,660.0 1434.3,658.8 1436.4,660.1 1438.4,657.9 1440.5,658.4 1442.6,657.4 1444.8,657.0 1447.1,659.4 1449.3,657.7 1451.6,660.4 1453.8,658.6 1456.1,661.2 1458.3,660.8 1460.9,655.9 1463.5,653.5 1465.6,653.6 1467.8,653.4 1469.9,653.6 1472.0,653.4 1474.2,653.6 1476.3,653.4 1478.5,653.6 1480.6,653.4 1482.7,653.6 1484.9,653.4 1487.0,653.5 1488.3,665.2 1490.5,665.3 1492.7,665.1 1494.9,665.3 1497.1,665.1 1499.3,665.3 1501.4,665.1 1503.6,665.3 1505.8,665.1 1508.0,665.3 1510.2,665.1 1512.4,665.3 1514.6,665.1 1516.8,665.2 1519.0,665.1 1521.2,665.3 1523.4,665.1 1525.5,665.3 1527.7,665.1 1529.9,665.3 1532.1,665.1 1534.3,665.3 1536.5,665.2 1538.5,654.4 1540.5,645.7 1542.5,647.9 1544.5,646.7 1546.5,649.6 1548.8,651.1 1551.1,648.8 1553.4,650.6 1555.7,649.6 1558.3,655.6 1560.2,653.2 1562.2,652.9 1564.1,648.7 1566.1,648.3 1568.3,650.2 1570.4,648.2 1572.6,650.4 1574.8,649.3 1576.9,651.6 1579.1,650.9 1581.2,649.6 1583.3,651.9 1585.4,650.1 1587.5,652.1 1589.6,651.1 1591.8,652.7 1593.9,650.9 1596.0,653.1 1598.1,651.6 1600.2,653.2 1602.3,652.5 1604.4,653.0 1606.6,653.7 1608.8,652.8 1611.1,653.7 1613.3,652.9 1615.5,653.7 1617.7,652.9 1620.0,654.0 1622.2,653.1 1624.4,654.1 1626.6,653.2 1628.8,654.1 1631.1,653.5 1633.3,654.5 1635.5,653.4 1637.7,654.6 1640.0,653.4 1642.2,654.8 1644.4,654.3 1646.6,653.6 1648.8,654.7 1651.1,653.7 1653.3,655.1 1655.5,653.7 1657.7,654.9 1659.9,654.1 1662.2,655.3 1664.4,654.2 1666.6,655.4 1668.8,653.9 1671.1,654.9 1673.3,654.3 1675.5,655.3 1677.7,654.3 1679.9,655.0 1682.2,654.0 1684.4,655.2 1686.6,654.8 1688.9,654.4 1691.2,655.6 1693.5,655.1 1695.8,656.5 1698.1,655.9 1700.4,657.1 1702.7,655.4 1705.0,658.4 1707.3,655.6 1709.6,657.4 1711.5,657.0 1713.5,654.4 1715.5,655.8 1717.4,653.5 1719.4,654.1 1721.3,658.0 1723.2,657.7 1725.2,660.0 1727.4,658.8 1729.6,655.9 1731.8,655.3 1733.9,652.0 1736.1,652.4 1738.3,649.6 1740.5,648.9 1742.6,651.1 1744.8,650.2 1747.0,652.0 1749.1,650.3 1751.3,652.2 1753.4,654.3 1755.5,651.7 1757.6,654.3 1759.7,653.7 1761.8,654.8 1763.8,655.8 1765.8,652.7 1767.8,653.1 1770.4,657.9 1773.0,660.1 1775.2,655.8 1777.4,654.2 1779.6,649.7 1781.8,672.1 1784.0,696.7 1786.3,674.2 1788.7,649.7 1790.9,648.5 1793.0,650.2 1795.2,649.7 1797.2,646.5 1799.2,645.8 1801.2,631.4 1803.1,613.1 1805.7,606.6 1807.7,599.2 1809.6,593.6 1812.2,592.3 1814.8,588.3 1817.0,582.6 1819.2,581.8 1821.4,576.6 1823.3,576.0 1825.3,577.4 1827.2,579.9 1829.2,580.5 1831.8,590.9 1834.0,589.0 1836.1,590.7 1838.3,589.6 1840.9,592.2 1843.6,598.8 1845.5,600.7 1847.5,598.8 1849.5,586.6 1851.4,577.9 1853.4,582.5 1855.3,581.5 1857.2,587.0 1859.2,588.3 1861.2,595.9 1863.1,606.6 1865.7,630.1 1867.7,627.0 1869.7,621.0 1871.9,621.4 1874.1,626.2 1874.1,716" fill="none" stroke="#000" stroke-width="1.2"/><polyline points="450.3,651.4 499.0,653.0 528.4,654.0 613.4,655.3 698.2,656.1 756.1,656.5 804.4,656.9 949.2,656.9 1043.9,679.0 1172.3,689.5 1284.3,695.2 1382.1,700.5 1449.7,702.5 1522.2,703.1 1604.4,711.4 1686.6,711.6 1751.3,713.0 1849.3,714.4 1874.1,716.0 1952.4,721.5" fill="none" stroke="#000" stroke-width="1.6"/><rect x="449.25" y="582.3" width="1.5" height="69.1" fill="#000"/><rect x="447.5" y="579.8" width="5.5" height="5.5" fill="#000"/><rect x="447.5" y="648.9" width="5.5" height="5.5" fill="#000"/><circle cx="450" cy="595.6" r="4.3" fill="#f00"/><rect x="527.25" y="590.4" width="1.5" height="63.6" fill="#000"/><rect x="525.5" y="587.9" width="5.5" height="5.5" fill="#000"/><rect x="525.5" y="651.5" width="5.5" height="5.5" fill="#000"/><circle cx="528" cy="630.0" r="4.3" fill="#f00"/><rect x="612.25" y="581.0" width="1.5" height="74.3" fill="#000"/><rect x="610.5" y="578.5" width="5.5" height="5.5" fill="#000"/><rect x="610.5" y="652.8" width="5.5" height="5.5" fill="#000"/><circle cx="613" cy="608.6" r="4.3" fill="#f00"/><rect x="697.25" y="562.2" width="1.5" height="93.9" fill="#000"/><rect x="695.5" y="559.7" width="5.5" height="5.5" fill="#000"/><rect x="695.5" y="653.6" width="5.5" height="5.5" fill="#000"/><circle cx="698" cy="649.6" r="4.3" fill="#f00"/><rect x="755.25" y="580.4" width="1.5" height="76.1" fill="#000"/><rect x="753.5" y="577.9" width="5.5" height="5.5" fill="#000"/><rect x="753.5" y="654.0" width="5.5" height="5.5" fill="#000"/><circle cx="756" cy="655.6" r="4.3" fill="#f00"/><rect x="803.25" y="615.1" width="1.5" height="41.8" fill="#000"/><rect x="801.5" y="612.6" width="5.5" height="5.5" fill="#000"/><rect x="801.5" y="654.4" width="5.5" height="5.5" fill="#000"/><circle cx="804" cy="634.7" r="4.3" fill="#f00"/><rect x="847.25" y="611.7" width="1.5" height="45.3" fill="#000"/><rect x="845.5" y="609.2" width="5.5" height="5.5" fill="#000"/><rect x="845.5" y="654.5" width="5.5" height="5.5" fill="#000"/><circle cx="848" cy="621.7" r="4.3" fill="#f00"/><rect x="887.25" y="591.4" width="1.5" height="65.6" fill="#000"/><rect x="885.5" y="588.9" width="5.5" height="5.5" fill="#000"/><rect x="885.5" y="654.5" width="5.5" height="5.5" fill="#000"/><circle cx="888" cy="617.5" r="4.3" fill="#f00"/><rect x="948.25" y="565.3" width="1.5" height="91.6" fill="#000"/><rect x="946.5" y="562.8" width="5.5" height="5.5" fill="#000"/><rect x="946.5" y="654.4" width="5.5" height="5.5" fill="#000"/><circle cx="949" cy="630.0" r="4.3" fill="#f00"/><rect x="1043.25" y="640.4" width="1.5" height="38.6" fill="#000"/><rect x="1041.5" y="637.9" width="5.5" height="5.5" fill="#000"/><rect x="1041.5" y="676.5" width="5.5" height="5.5" fill="#000"/><circle cx="1044" cy="647.0" r="4.3" fill="#f00"/><rect x="1171.25" y="625.6" width="1.5" height="63.9" fill="#000"/><rect x="1169.5" y="623.1" width="5.5" height="5.5" fill="#000"/><rect x="1169.5" y="687.0" width="5.5" height="5.5" fill="#000"/><circle cx="1172" cy="673.8" r="4.3" fill="#f00"/><rect x="1283.25" y="638.4" width="1.5" height="56.8" fill="#000"/><rect x="1281.5" y="635.9" width="5.5" height="5.5" fill="#000"/><rect x="1281.5" y="692.7" width="5.5" height="5.5" fill="#000"/><circle cx="1284" cy="688.7" r="4.3" fill="#f00"/><rect x="1381.25" y="646.2" width="1.5" height="54.3" fill="#000"/><rect x="1379.5" y="643.7" width="5.5" height="5.5" fill="#000"/><rect x="1379.5" y="698.0" width="5.5" height="5.5" fill="#000"/><circle cx="1382" cy="695.8" r="4.3" fill="#f00"/><rect x="1449.25" y="656.1" width="1.5" height="46.4" fill="#000"/><rect x="1447.5" y="653.6" width="5.5" height="5.5" fill="#000"/><rect x="1447.5" y="700.0" width="5.5" height="5.5" fill="#000"/><circle cx="1450" cy="668.6" r="4.3" fill="#f00"/><rect x="1521.25" y="673.8" width="1.5" height="29.3" fill="#000"/><rect x="1519.5" y="700.6" width="5.5" height="5.5" fill="#000"/><circle cx="1522" cy="673.8" r="4.3" fill="#f00"/><rect x="1603.25" y="653.0" width="1.5" height="58.4" fill="#000"/><rect x="1601.5" y="650.5" width="5.5" height="5.5" fill="#000"/><rect x="1601.5" y="708.9" width="5.5" height="5.5" fill="#000"/><circle cx="1604" cy="698.4" r="4.3" fill="#f00"/><rect x="1686.25" y="655.1" width="1.5" height="56.5" fill="#000"/><rect x="1684.5" y="652.6" width="5.5" height="5.5" fill="#000"/><rect x="1684.5" y="709.1" width="5.5" height="5.5" fill="#000"/><circle cx="1687" cy="710.9" r="4.3" fill="#f00"/><rect x="1750.25" y="652.2" width="1.5" height="60.8" fill="#000"/><rect x="1748.5" y="649.7" width="5.5" height="5.5" fill="#000"/><rect x="1748.5" y="710.5" width="5.5" height="5.5" fill="#000"/><circle cx="1751" cy="706.5" r="4.3" fill="#f00"/><rect x="1848.25" y="584.4" width="1.5" height="130.0" fill="#000"/><rect x="1846.5" y="581.9" width="5.5" height="5.5" fill="#000"/><rect x="1846.5" y="711.9" width="5.5" height="5.5" fill="#000"/><circle cx="1849" cy="644.0" r="4.3" fill="#f00"/><rect x="1951.25" y="525.1" width="1.5" height="196.4" fill="#000"/><rect x="1949.5" y="522.6" width="5.5" height="5.5" fill="#000"/><rect x="1949.5" y="719.0" width="5.5" height="5.5" fill="#000"/><circle cx="1952" cy="541.3" r="4.3" fill="#f00"/><rect x="126" y="516" width="1861" height="2" fill="#000"/><rect x="126" y="516" width="2" height="224" fill="#000"/><rect x="1985" y="516" width="2" height="224" fill="#000"/><rect x="126" y="737" width="1861" height="3" fill="#000"/><rect x="122" y="739.0" width="4" height="1.5" fill="#000"/><rect x="124" y="727.0" width="2" height="1.5" fill="#000"/><rect x="122" y="714.0" width="4" height="1.5" fill="#000"/><rect x="124" y="702.0" width="2" height="1.5" fill="#000"/><rect x="122" y="690.0" width="4" height="1.5" fill="#000"/><rect x="124" y="677.0" width="2" height="1.5" fill="#000"/><rect x="122" y="665.0" width="4" height="1.5" fill="#000"/><rect x="124" y="653.0" width="2" height="1.5" fill="#000"/><rect x="122" y="640.0" width="4" height="1.5" fill="#000"/><rect x="124" y="628.0" width="2" height="1.5" fill="#000"/><rect x="122" y="616.0" width="4" height="1.5" fill="#000"/><rect x="124" y="603.0" width="2" height="1.5" fill="#000"/><rect x="122" y="591.0" width="4" height="1.5" fill="#000"/><rect x="124" y="579.0" width="2" height="1.5" fill="#000"/><rect x="122" y="566.0" width="4" height="1.5" fill="#000"/><rect x="124" y="554.0" width="2" height="1.5" fill="#000"/><rect x="122" y="542.0" width="4" height="1.5" fill="#000"/><rect x="124" y="529.0" width="2" height="1.5" fill="#000"/><rect x="122" y="517.0" width="4" height="1.5" fill="#000"/><rect x="127.0" y="740" width="1.5" height="4" fill="#000"/><rect x="201.0" y="740" width="1.5" height="4" fill="#000"/><rect x="276.0" y="740" width="1.5" height="4" fill="#000"/><rect x="350.0" y="740" width="1.5" height="4" fill="#000"/><rect x="425.0" y="740" width="1.5" height="4" fill="#000"/><rect x="499.0" y="740" width="1.5" height="4" fill="#000"/><rect x="573.0" y="740" width="1.5" height="4" fill="#000"/><rect x="648.0" y="740" width="1.5" height="4" fill="#000"/><rect x="722.0" y="740" width="1.5" height="4" fill="#000"/><rect x="797.0" y="740" width="1.5" height="4" fill="#000"/><rect x="871.0" y="740" width="1.5" height="4" fill="#000"/><rect x="945.0" y="740" width="1.5" height="4" fill="#000"/><rect x="1020.0" y="740" width="1.5" height="4" fill="#000"/><rect x="1094.0" y="740" width="1.5" height="4" fill="#000"/><rect x="1169.0" y="740" width="1.5" height="4" fill="#000"/><rect x="1243.0" y="740" width="1.5" height="4" fill="#000"/><rect x="1317.0" y="740" width="1.5" height="4" fill="#000"/><rect x="1392.0" y="740" width="1.5" height="4" fill="#000"/><rect x="1466.0" y="740" width="1.5" height="4" fill="#000"/><rect x="1541.0" y="740" width="1.5" height="4" fill="#000"/><rect x="1615.0" y="740" width="1.5" height="4" fill="#000"/><rect x="1689.0" y="740" width="1.5" height="4" fill="#000"/><rect x="1764.0" y="740" width="1.5" height="4" fill="#000"/><rect x="1838.0" y="740" width="1.5" height="4" fill="#000"/><rect x="1913.0" y="740" width="1.5" height="4" fill="#000"/><rect x="1987.0" y="740" width="1.5" height="4" fill="#000"/></svg>
<div class="t" style="left:70px;top:733px;width:50px;text-align:right;font-size:13px;letter-spacing:0">300</div>
<div class="t" style="left:70px;top:708px;width:50px;text-align:right;font-size:13px;letter-spacing:0">302</div>
<div class="t" style="left:70px;top:684px;width:50px;text-align:right;font-size:13px;letter-spacing:0">304</div>
<div class="t" style="left:70px;top:659px;width:50px;text-align:right;font-size:13px;letter-spacing:0">306</div>
<div class="t" style="left:70px;top:634px;width:50px;text-align:right;font-size:13px;letter-spacing:0">308</div>
<div class="t" style="left:70px;top:610px;width:50px;text-align:right;font-size:13px;letter-spacing:0">310</div>
<div class="t" style="left:70px;top:585px;width:50px;text-align:right;font-size:13px;letter-spacing:0">312</div>
<div class="t" style="left:70px;top:560px;width:50px;text-align:right;font-size:13px;letter-spacing:0">314</div>
<div class="t" style="left:70px;top:536px;width:50px;text-align:right;font-size:13px;letter-spacing:0">316</div>
<div class="t" style="left:70px;top:511px;width:50px;text-align:right;font-size:13px;letter-spacing:0">318</div>
<div class="t" style="left:87.5px;top:748px;width:80px;text-align:center;font-size:13px;letter-spacing:0">-1000</div>
<div class="t" style="left:459.5px;top:748px;width:80px;text-align:center;font-size:13px;letter-spacing:0">0</div>
<div class="t" style="left:831.5px;top:748px;width:80px;text-align:center;font-size:13px;letter-spacing:0">1000</div>
<div class="t" style="left:1203.5px;top:748px;width:80px;text-align:center;font-size:13px;letter-spacing:0">2000</div>
<div class="t" style="left:1575.5px;top:748px;width:80px;text-align:center;font-size:13px;letter-spacing:0">3000</div>
<div class="t" style="left:1947.5px;top:748px;width:80px;text-align:center;font-size:13px;letter-spacing:0">4000</div>
<div class="t" style="left:1000px;top:775px;width:114px;text-align:center;font-size:13px;letter-spacing:0">Station (m)</div>
<div class="t" style="left:17px;top:620px;width:100px;text-align:center;font-size:13px;letter-spacing:0;transform:rotate(-90deg)">Elevation (m)</div>
<div class="t" style="left:410px;top:488px;width:80px;text-align:center;font-size:13px;letter-spacing:0">6614.165</div>
<div class="t" style="left:573px;top:488px;width:80px;text-align:center;font-size:13px;letter-spacing:0">6108.009</div>
<div class="t" style="left:716px;top:488px;width:80px;text-align:center;font-size:13px;letter-spacing:0">5748.479</div>
<div class="t" style="left:848px;top:488px;width:80px;text-align:center;font-size:13px;letter-spacing:0">5315.862</div>
<div class="t" style="left:1004px;top:488px;width:80px;text-align:center;font-size:13px;letter-spacing:0">4921.906</div>
<div class="t" style="left:1132px;top:488px;width:80px;text-align:center;font-size:13px;letter-spacing:0">4609.240</div>
<div class="t" style="left:1342px;top:488px;width:80px;text-align:center;font-size:13px;letter-spacing:0">3985.630</div>
<div class="t" style="left:1482px;top:488px;width:80px;text-align:center;font-size:13px;letter-spacing:0">3603.667</div>
<div class="t" style="left:1646px;top:488px;width:80px;text-align:center;font-size:13px;letter-spacing:0">3158.212</div>
<div class="t" style="left:1809px;top:488px;width:80px;text-align:center;font-size:13px;letter-spacing:0">2795.452</div>
<div class="t" style="left:866px;top:433px;width:400px;text-align:center;font-size:16px;letter-spacing:0.2px">HW and TW Connections Determined Geo-Spatially</div>
<div style="left:1994px;top:517px;width:79px;height:133px;border:1px solid #000;background:#fff"></div>
<div class="t" style="left:1994px;top:518px;width:79px;text-align:center;font-size:13.5px;font-weight:bold;letter-spacing:0">Legend</div>
<div style="left:1995px;top:535px;width:77px;height:1px;background:#000"></div>
<div style="left:2000px;top:540px;width:67px;height:8px;background:#c0c0c0;border:1px solid #808080"></div>
<div class="t" style="left:1994px;top:549px;width:79px;text-align:center;font-size:13px;letter-spacing:0">Lat Struct</div>
<div style="left:2000px;top:570px;width:67px;height:1px;background:#000"></div>
<div style="left:2031px;top:568px;width:6px;height:6px;background:#000"></div>
<div class="t" style="left:1994px;top:576px;width:79px;text-align:center;font-size:13px;letter-spacing:0">Ground</div>
<div style="left:2030px;top:593px;width:8px;height:8px;border-radius:50%;background:#f00"></div>
<div class="t" style="left:1994px;top:602px;width:79px;text-align:center;font-size:13px;letter-spacing:0">Bank Sta</div>
<div style="left:2000px;top:624px;width:67px;height:1px;background:#808080"></div>
<div class="t" style="left:1994px;top:629px;width:79px;text-align:center;font-size:13px;letter-spacing:0">LS Terrain</div>

<div class="t" style="left:838px;top:393px;font-size:54px;font-weight:bold;color:rgba(255,255,255,0.55);letter-spacing:0px">SURFACE LIBRE</div>
<svg width="14" height="20" style="left:954px;top:290px" viewBox="0 0 14 20"><path d="M0.5 0.5 L0.5 16 L4 12.5 L6.5 18.5 L9 17.5 L6.5 11.5 L11.5 11.5 Z" fill="#fff" stroke="#000" stroke-width="1"/></svg>
</body></html>
